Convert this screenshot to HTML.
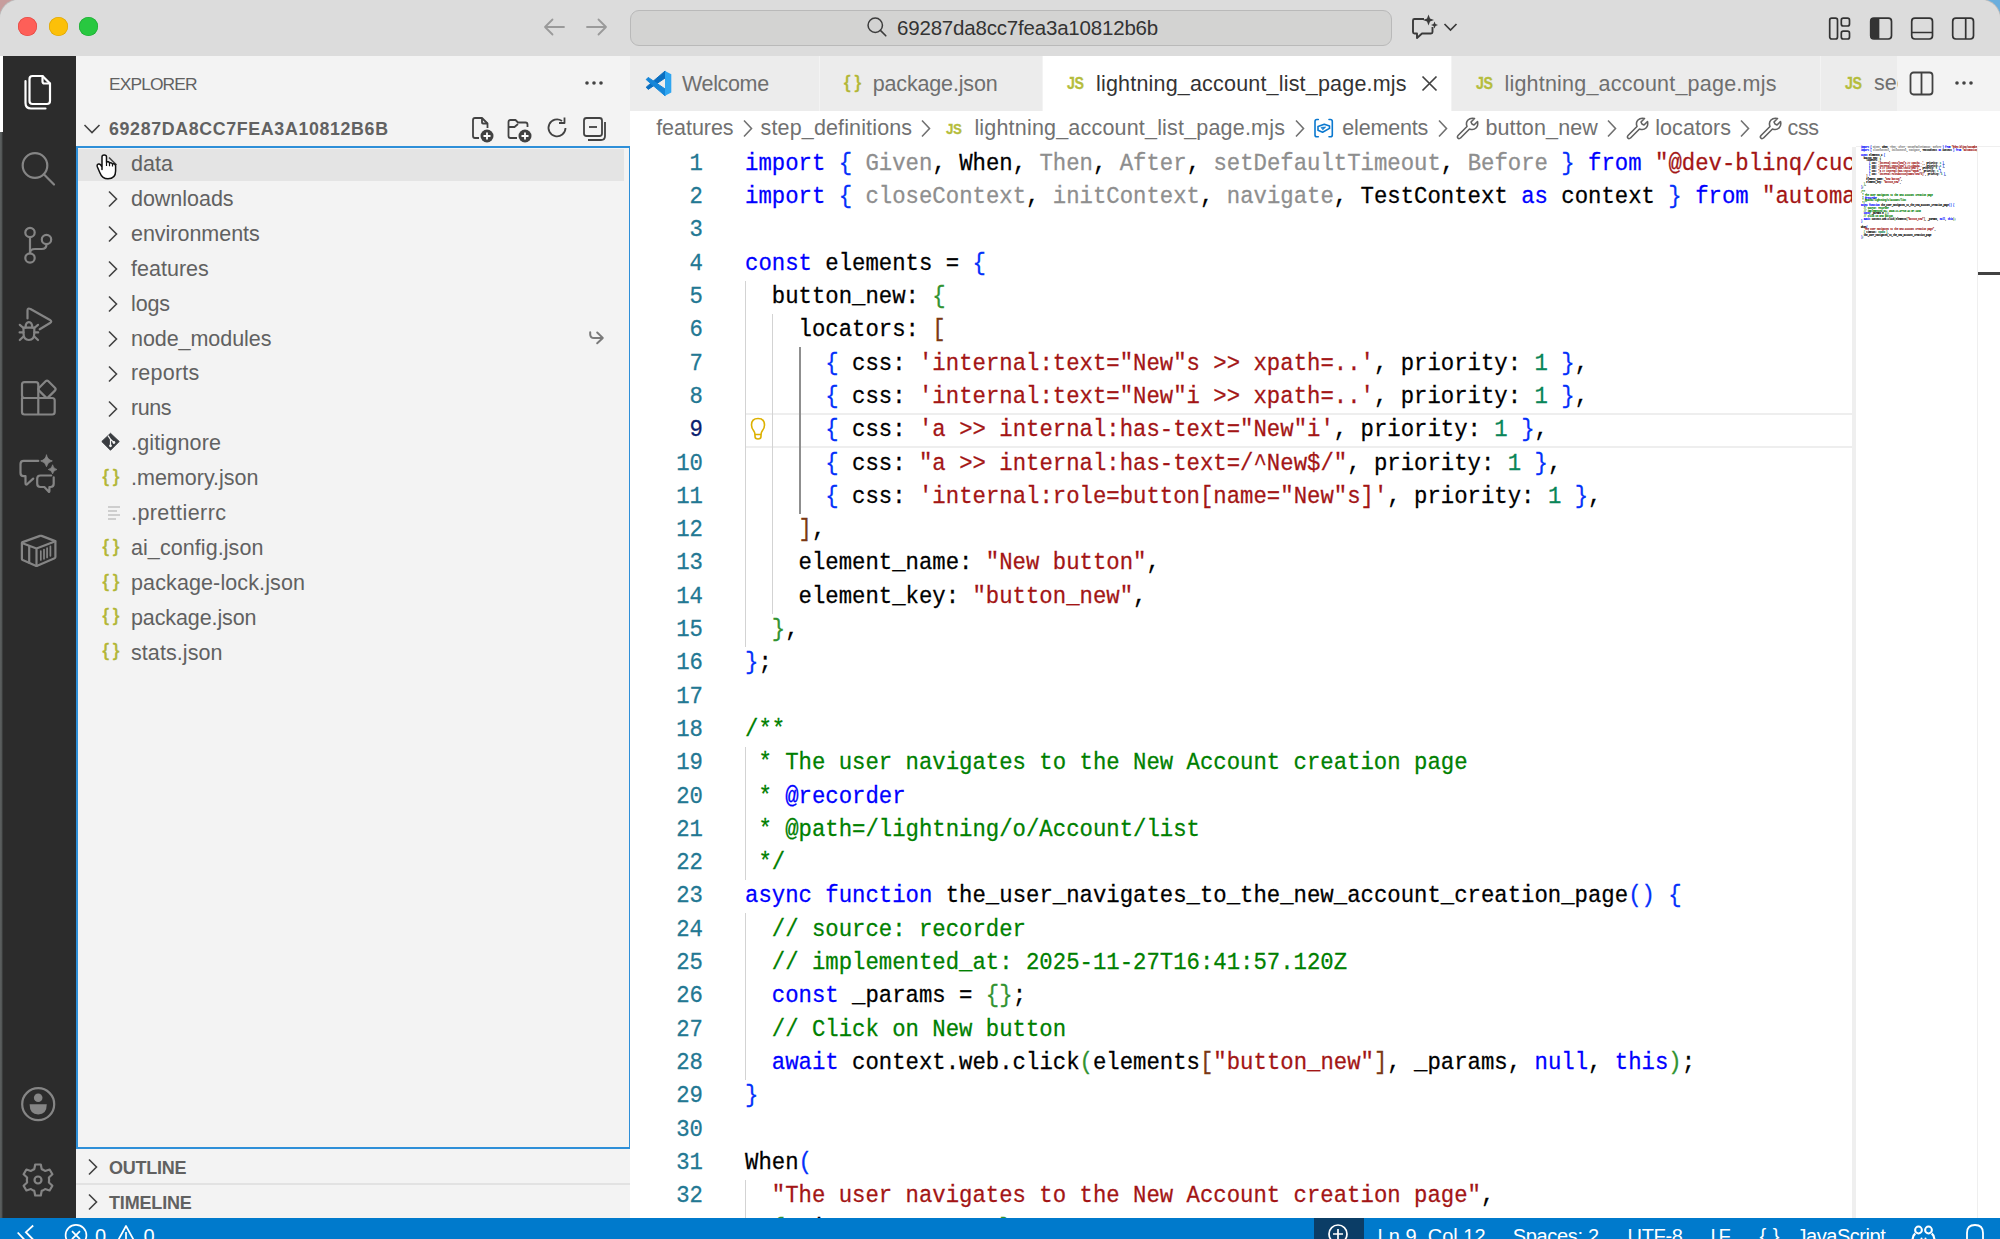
<!DOCTYPE html><html><head><meta charset="utf-8"><style>
*{margin:0;padding:0;box-sizing:border-box}
html,body{width:2000px;height:1239px;overflow:hidden;background:#dcdcdc}
body{position:relative;font-family:"Liberation Sans",sans-serif}
.a{position:absolute}
.t{position:absolute;white-space:pre;line-height:1}
svg{position:absolute;overflow:visible}
.code{font-family:"Liberation Mono",monospace;font-size:22.30px;white-space:pre}
.ln{position:absolute;width:62px;text-align:right;height:33.30px;line-height:33.30px}
.cl{position:absolute;height:33.30px;line-height:33.30px}
.sy{transform-origin:0 23px;transform:scaleY(1.09);-webkit-text-stroke:0.25px currentColor}
.k{color:#0000ff}.s{color:#a31515}.n{color:#098658}.c{color:#008000}.f{color:#8e8e8e}
.b1{color:#0431fa}.b2{color:#319331}.b3{color:#7b3814}
</style></head><body>
<div class="a" style="left:0;top:0;width:40px;height:40px;background:#c79d9d"></div>
<div class="a" style="left:1960px;top:0;width:40px;height:40px;background:#6aaedd"></div>
<div class="a" style="left:0;top:0;width:2000px;height:1300px;border-radius:19px 19px 0 0;background:#dcdcdc;overflow:hidden;box-shadow:0 0 0 1px #bdbdbd">
<div class="a" style="left:0;top:0;width:2000px;height:55px;background:#dcdcdc"></div>
<div class="a" style="left:18.4px;top:17.0px;width:18.8px;height:18.8px;border-radius:50%;background:#fe5f58;box-shadow:inset 0 0 0 0.6px #e14640"></div>
<div class="a" style="left:48.9px;top:17.0px;width:18.8px;height:18.8px;border-radius:50%;background:#fcc009;box-shadow:inset 0 0 0 0.6px #d9a406"></div>
<div class="a" style="left:79.39999999999999px;top:17.0px;width:18.8px;height:18.8px;border-radius:50%;background:#28c840;box-shadow:inset 0 0 0 0.6px #1ea934"></div>
<svg style="left:543px;top:17px" width="24" height="20" viewBox="0 0 24 20"><path d="M2 10H21M2 10L9.5 2.5M2 10L9.5 17.5" stroke="#9a9a9a" stroke-width="1.8" fill="none" stroke-linecap="round"/></svg>
<svg style="left:584px;top:17px" width="24" height="20" viewBox="0 0 24 20"><path d="M22 10H3M22 10L14.5 2.5M22 10L14.5 17.5" stroke="#9a9a9a" stroke-width="1.8" fill="none" stroke-linecap="round"/></svg>
<div class="a" style="left:629.5px;top:9.5px;width:762px;height:36.5px;border-radius:9px;background:#d3d3d2;border:1.3px solid #b9b9b9"></div>
<svg style="left:866px;top:17px" width="22" height="22" viewBox="0 0 22 22"><circle cx="9.25" cy="8.25" r="7.2" stroke="#3c3c3c" stroke-width="1.5" fill="none"/><path d="M14.4 13.4L19.8 18.8" stroke="#3c3c3c" stroke-width="1.6" stroke-linecap="round"/></svg>
<div class="t" style="left:897.00px;top:18.25px;font-size:20.5px;color:#333333;font-weight:400;font-family:'Liberation Sans';letter-spacing:-0.192px;">69287da8cc7fea3a10812b6b</div>
<svg style="left:1410px;top:13px" width="30" height="28" viewBox="0 0 30 28"><path d="M14 6H4.5Q3 6 3 7.5V19Q3 20.5 4.5 20.5H7V25L12 20.5H21Q22.5 20.5 22.5 19V14" stroke="#3a3a3a" stroke-width="1.9" fill="none" stroke-linejoin="round"/><path d="M18.5 1.5L20 5.5L24 7L20 8.5L18.5 12.5L17 8.5L13 7L17 5.5Z" fill="#3a3a3a"/><path d="M24.5 8.5L25.5 11L28 12L25.5 13L24.5 15.5L23.5 13L21 12L23.5 11Z" fill="#3a3a3a"/></svg>
<svg style="left:1443px;top:22px" width="15" height="10" viewBox="0 0 15 10"><path d="M1.5 2L7.5 8L13.5 2" stroke="#3a3a3a" stroke-width="1.7" fill="none"/></svg>
<svg style="left:1827.5px;top:15.7px" width="26" height="26" viewBox="0 0 26 26" fill="none" stroke="#333" stroke-width="1.7"><rect x="1.7" y="2.2" width="7.8" height="20.8" rx="2"/><rect x="13.3" y="2.2" width="8.2" height="7.8" rx="2"/><rect x="13.3" y="15.2" width="8.2" height="7.8" rx="2"/></svg>
<svg style="left:1868.5px;top:15.7px" width="26" height="26" viewBox="0 0 26 26" fill="none" stroke="#333" stroke-width="1.7"><rect x="1.7" y="2.2" width="20.8" height="20.8" rx="3.2"/><path d="M2 2.5H10.2V22.8H2Z" fill="#333" stroke="none"/><path d="M5 2.2H10.2V23H5" fill="#333" stroke="none"/></svg>
<svg style="left:1909.5px;top:15.7px" width="26" height="26" viewBox="0 0 26 26" fill="none" stroke="#333" stroke-width="1.7"><rect x="1.7" y="2.2" width="20.8" height="20.8" rx="3.2"/><path d="M2 16.5H22.5"/></svg>
<svg style="left:1950.5px;top:15.7px" width="26" height="26" viewBox="0 0 26 26" fill="none" stroke="#333" stroke-width="1.7"><rect x="1.7" y="2.2" width="20.8" height="20.8" rx="3.2"/><path d="M14.7 2.2V23"/></svg>
<div class="a" style="left:0;top:55.5px;width:76px;height:1170px;background:#2c2c2c"></div>
<div class="a" style="left:0;top:132px;width:2.5px;height:1090px;background:linear-gradient(90deg,#5a5e5e 0,#5a5e5e 1.2px,#3a3c3c 2.5px)"></div>
<div class="a" style="left:0;top:55.5px;width:3px;height:76.5px;background:#ffffff"></div>
<svg style="left:18.0px;top:73.0px" width="40" height="40" viewBox="0 0 40 40" fill="none" stroke="#ffffff" stroke-width="2.2" stroke-linejoin="round" stroke-linecap="round"><path d="M11.5 6Q11.5 3 14.5 3H24.5L32 10.5V28Q32 31 29 31H14.5Q11.5 31 11.5 28Z"/><path d="M24.5 3V8.5Q24.5 10.5 26.5 10.5H32"/><path d="M7.5 8V30Q7.5 35.5 13 35.5H27.5"/></svg>
<svg style="left:18.0px;top:148.0px" width="40" height="40" viewBox="0 0 40 40" fill="none" stroke="#858585" stroke-width="2.2" stroke-linejoin="round" stroke-linecap="round"><circle cx="17" cy="17.5" r="12.3"/><path d="M25.8 26.3L36 36.5"/></svg>
<svg style="left:18.0px;top:225.0px" width="40" height="40" viewBox="0 0 40 40" fill="none" stroke="#858585" stroke-width="2.2" stroke-linejoin="round" stroke-linecap="round"><circle cx="12" cy="7.5" r="4.7"/><circle cx="12" cy="33" r="4.7"/><circle cx="28.5" cy="14.5" r="4.7"/><path d="M12 12.2V28.3"/><path d="M28.5 19.2Q28.5 24 23.5 24H17Q12 24 12 28"/></svg>
<svg style="left:18.0px;top:303.0px" width="40" height="40" viewBox="0 0 40 40" fill="none" stroke="#858585" stroke-width="2.2" stroke-linejoin="round" stroke-linecap="round"><path d="M9.5 15.5V7.5Q9.5 4.5 12.5 6L32 17Q34.5 18.5 32 20L21.7 26.3"/><path d="M5.5 24.6H16.3V30Q16.3 37 10.9 37Q5.5 37 5.5 30Z"/><path d="M7.6 24.6Q7.6 19.2 10.9 19.2Q14.2 19.2 14.2 24.6"/><path d="M1.8 21.8L5.5 25M1.6 29.4H5.5M1.8 37L5.5 33.5M20 21.8L16.3 25M20.2 29.4H16.3M20 37L16.3 33.5"/></svg>
<svg style="left:18.0px;top:378.0px" width="40" height="40" viewBox="0 0 40 40" fill="none" stroke="#858585" stroke-width="2.2" stroke-linejoin="round" stroke-linecap="round"><path d="M20.3 20H6.4Q4 20 4 17.6V6.6Q4 4.2 6.4 4.2H17.9Q20.3 4.2 20.3 6.6Z"/><path d="M4 20V34Q4 36.5 6.5 36.5H34.2Q36.7 36.5 36.7 34V22.5Q36.7 20 34.2 20H4M20.3 20V36.5"/><path d="M27.6 3.3Q29 1.9 30.4 3.3L36.9 9.8Q38.3 11.2 36.9 12.6L30.4 19.1Q29 20.5 27.6 19.1L21.1 12.6Q19.7 11.2 21.1 9.8Z"/></svg>
<svg style="left:18.0px;top:454.0px" width="40" height="40" viewBox="0 0 40 40" fill="none" stroke="#858585" stroke-width="2.2" stroke-linejoin="round" stroke-linecap="round"><path d="M20.3 6.9H5.7Q2.5 6.9 2.5 10.1V19Q2.5 22.2 5.7 22.2H7.5V29Q7.5 31.6 9.6 29.8L15.2 24.6"/><path d="M33.2 21.5H22.4Q19.2 21.5 19.2 24.7V29.8Q19.2 33 22.4 33H26.3L30.6 37.6Q31.4 38.3 31.4 37V33H32.5Q35.7 33 35.7 29.8V23.3"/><path d="M28.5 1.1Q29.4 5.9 34.3 6.9Q29.4 7.9 28.5 12.7Q27.6 7.9 22.7 6.9Q27.6 5.9 28.5 1.1Z" fill="#858585" stroke-width="0.8"/><path d="M34.6 11.2Q35.3 14.8 38.9 15.5Q35.3 16.2 34.6 19.8Q33.9 16.2 30.3 15.5Q33.9 14.8 34.6 11.2Z" fill="#858585" stroke-width="0.8"/></svg>
<svg style="left:18.0px;top:530.0px" width="40" height="40" viewBox="0 0 40 40" fill="none" stroke="#858585" stroke-width="2.2" stroke-linejoin="round" stroke-linecap="round"><path d="M3.9 13.2Q3.9 12.4 4.7 12.1L22 5.9Q22.8 5.6 23.6 5.9L36.6 10.9Q37.4 11.2 37.4 12V27.1Q37.4 27.9 36.6 28.2L19.3 35.7Q18.5 36.1 17.7 35.7L4.7 30.1Q3.9 29.7 3.9 28.9Z"/><path d="M3.9 13L18.5 18.5L37.4 11.2M18.5 18.5V36M11.2 15.8V32.8"/><path d="M22.8 21V30M26 19.6V28.8M29.1 18V27.4M32.4 16.3V25.8" stroke-width="1.7"/></svg>
<svg style="left:18.0px;top:1084.0px" width="40" height="40" viewBox="0 0 40 40" fill="none" stroke="#858585" stroke-width="2.2" stroke-linejoin="round" stroke-linecap="round"><circle cx="20.2" cy="20.2" r="16"/><circle cx="20.2" cy="13.8" r="4.3" fill="#858585" stroke="none"/><path d="M11.6 20.2H28.8Q28.8 30.4 20.2 30.4Q11.6 30.4 11.6 20.2Z" fill="#858585" stroke="none"/></svg>
<svg style="left:18.0px;top:1160.0px" width="40" height="40" viewBox="0 0 40 40" fill="none" stroke="#858585" stroke-width="2.2" stroke-linejoin="round" stroke-linecap="round"><circle cx="20" cy="20" r="3.5"/><path d="M17.2 4.5H22.8L23.7 9.1Q25.6 9.8 27.1 11L31.6 9.5L34.4 14.3L30.9 17.5Q31.3 20 30.9 22.5L34.4 25.7L31.6 30.5L27.1 29Q25.6 30.2 23.7 30.9L22.8 35.5H17.2L16.3 30.9Q14.4 30.2 12.9 29L8.4 30.5L5.6 25.7L9.1 22.5Q8.7 20 9.1 17.5L5.6 14.3L8.4 9.5L12.9 11Q14.4 9.8 16.3 9.1Z"/></svg>
<div class="a" style="left:76px;top:55.5px;width:554px;height:1170px;background:#f3f3f3"></div>
<div class="t" style="left:109.00px;top:75.80px;font-size:17.4px;color:#616161;font-weight:400;font-family:'Liberation Sans';letter-spacing:-0.888px;">EXPLORER</div>
<svg style="left:584px;top:80px" width="20" height="6" viewBox="0 0 20 6"><circle cx="3" cy="3" r="1.8" fill="#424242"/><circle cx="10" cy="3" r="1.8" fill="#424242"/><circle cx="17" cy="3" r="1.8" fill="#424242"/></svg>
<svg style="left:83px;top:123px" width="18" height="12" viewBox="0 0 18 12"><path d="M1.5 2L9 9.5L16.5 2" stroke="#424242" stroke-width="1.6" fill="none"/></svg>
<div class="t" style="left:109.00px;top:121.30px;font-size:17.8px;color:#616161;font-weight:700;font-family:'Liberation Sans';letter-spacing:0.656px;">69287DA8CC7FEA3A10812B6B</div>
<svg style="left:468px;top:115px" width="28" height="28" viewBox="0 0 28 28" fill="none" stroke="#424242" stroke-width="1.8" stroke-linejoin="round"><path d="M11 23H7Q5 23 5 21V5Q5 3 7 3H14L19.5 8.5V13"/><path d="M14 3V7.5Q14 8.5 15 8.5H19.5"/><circle cx="19" cy="21" r="6.5" fill="#424242" stroke="none"/><path d="M19 17.5V24.5M15.5 21H22.5" stroke="#fff" stroke-width="1.8"/></svg>
<svg style="left:505px;top:115px" width="28" height="28" viewBox="0 0 28 28" fill="none" stroke="#424242" stroke-width="1.8" stroke-linejoin="round"><path d="M12 23H5.5Q3.5 23 3.5 21V7Q3.5 5 5.5 5H10.5L13 7.5H20.5Q22.5 7.5 22.5 9.5V12"/><path d="M3.5 12H9.5L13 9"/><circle cx="20" cy="21" r="6.5" fill="#424242" stroke="none"/><path d="M20 17.5V24.5M16.5 21H23.5" stroke="#fff" stroke-width="1.8"/></svg>
<svg style="left:543px;top:115px" width="28" height="28" viewBox="0 0 28 28" fill="none" stroke="#424242" stroke-width="1.8" stroke-linejoin="round"><path d="M22.5 13A8.5 8.5 0 1 1 19 6"/><path d="M21.5 2.5V8H16"/></svg>
<svg style="left:581px;top:115px" width="28" height="28" viewBox="0 0 28 28" fill="none" stroke="#424242" stroke-width="1.8" stroke-linejoin="round"><rect x="3" y="3" width="18" height="18" rx="2.5"/><path d="M24 7V21Q24 25 20 25H7"/><path d="M8 12H16"/></svg>
<div class="a" style="left:76px;top:146px;width:554px;height:1003px;border:2px solid #2e8fd8;border-right-width:1.6px"></div>
<div class="a" style="left:78px;top:148.8px;width:546px;height:31.8px;background:#e4e4e4"></div>
<svg style="left:106px;top:155.50px" width="14" height="18" viewBox="0 0 14 18"><path d="M3 1.5L10.5 9" stroke="#424242" stroke-width="1.6" fill="none"/></svg>
<div class="t" style="left:131.00px;top:153.85px;font-size:21.5px;color:#616161;font-weight:400;font-family:'Liberation Sans';letter-spacing:0.000px;">data</div>
<svg style="left:106px;top:190.43px" width="14" height="18" viewBox="0 0 14 18"><path d="M3 1.5L10.5 9L3 16.5" stroke="#424242" stroke-width="1.6" fill="none"/></svg>
<div class="t" style="left:131.00px;top:188.78px;font-size:21.5px;color:#616161;font-weight:400;font-family:'Liberation Sans';letter-spacing:-0.025px;">downloads</div>
<svg style="left:106px;top:225.36px" width="14" height="18" viewBox="0 0 14 18"><path d="M3 1.5L10.5 9L3 16.5" stroke="#424242" stroke-width="1.6" fill="none"/></svg>
<div class="t" style="left:131.00px;top:223.71px;font-size:21.5px;color:#616161;font-weight:400;font-family:'Liberation Sans';letter-spacing:-0.025px;">environments</div>
<svg style="left:106px;top:260.29px" width="14" height="18" viewBox="0 0 14 18"><path d="M3 1.5L10.5 9L3 16.5" stroke="#424242" stroke-width="1.6" fill="none"/></svg>
<div class="t" style="left:131.00px;top:258.64px;font-size:21.5px;color:#616161;font-weight:400;font-family:'Liberation Sans';letter-spacing:0.016px;">features</div>
<svg style="left:106px;top:295.22px" width="14" height="18" viewBox="0 0 14 18"><path d="M3 1.5L10.5 9L3 16.5" stroke="#424242" stroke-width="1.6" fill="none"/></svg>
<div class="t" style="left:131.00px;top:293.57px;font-size:21.5px;color:#616161;font-weight:400;font-family:'Liberation Sans';letter-spacing:-0.151px;">logs</div>
<svg style="left:106px;top:330.15px" width="14" height="18" viewBox="0 0 14 18"><path d="M3 1.5L10.5 9L3 16.5" stroke="#424242" stroke-width="1.6" fill="none"/></svg>
<div class="t" style="left:131.00px;top:328.50px;font-size:21.5px;color:#616161;font-weight:400;font-family:'Liberation Sans';letter-spacing:-0.060px;">node_modules</div>
<svg style="left:106px;top:365.08px" width="14" height="18" viewBox="0 0 14 18"><path d="M3 1.5L10.5 9L3 16.5" stroke="#424242" stroke-width="1.6" fill="none"/></svg>
<div class="t" style="left:131.00px;top:363.43px;font-size:21.5px;color:#616161;font-weight:400;font-family:'Liberation Sans';letter-spacing:0.213px;">reports</div>
<svg style="left:106px;top:400.01px" width="14" height="18" viewBox="0 0 14 18"><path d="M3 1.5L10.5 9L3 16.5" stroke="#424242" stroke-width="1.6" fill="none"/></svg>
<div class="t" style="left:131.00px;top:398.36px;font-size:21.5px;color:#616161;font-weight:400;font-family:'Liberation Sans';letter-spacing:-0.409px;">runs</div>
<svg style="left:101px;top:433.44px" width="20" height="20" viewBox="0 0 20 20"><path d="M9.5 0.3L18.2 8.5L9.5 17.2L0.8 8.5Z" fill="#393c40" stroke="#393c40" stroke-width="1" stroke-linejoin="round"/><path d="M7 2.6L9.5 6.3V12.6M9.5 6.3L12.8 9.4" stroke="#f3f3f3" stroke-width="1.2" fill="none"/><circle cx="9.5" cy="12.8" r="1.4" fill="#f3f3f3"/><circle cx="12.9" cy="9.5" r="1.4" fill="#f3f3f3"/></svg>
<div class="t" style="left:131.00px;top:433.29px;font-size:21.5px;color:#616161;font-weight:400;font-family:'Liberation Sans';letter-spacing:0.172px;">.gitignore</div>
<div class="t" style="left:102.5px;top:465.72px;font-size:19px;color:#b2b634;font-weight:400;-webkit-text-stroke:0.6px #b2b634">{</div>
<div class="t" style="left:113.0px;top:465.72px;font-size:19px;color:#b2b634;font-weight:400;-webkit-text-stroke:0.6px #b2b634">}</div>
<div class="t" style="left:131.00px;top:468.22px;font-size:21.5px;color:#616161;font-weight:400;font-family:'Liberation Sans';letter-spacing:0.006px;">.memory.json</div>
<svg style="left:107px;top:505.30px" width="16" height="16" viewBox="0 0 16 16"><path d="M1 2H13M1 6H10M1 10H13M1 14H9" stroke="#c2c2c2" stroke-width="1.7"/></svg>
<div class="t" style="left:131.00px;top:503.15px;font-size:21.5px;color:#616161;font-weight:400;font-family:'Liberation Sans';letter-spacing:0.419px;">.prettierrc</div>
<div class="t" style="left:102.5px;top:535.58px;font-size:19px;color:#b2b634;font-weight:400;-webkit-text-stroke:0.6px #b2b634">{</div>
<div class="t" style="left:113.0px;top:535.58px;font-size:19px;color:#b2b634;font-weight:400;-webkit-text-stroke:0.6px #b2b634">}</div>
<div class="t" style="left:131.00px;top:538.08px;font-size:21.5px;color:#616161;font-weight:400;font-family:'Liberation Sans';letter-spacing:0.070px;">ai_config.json</div>
<div class="t" style="left:102.5px;top:570.51px;font-size:19px;color:#b2b634;font-weight:400;-webkit-text-stroke:0.6px #b2b634">{</div>
<div class="t" style="left:113.0px;top:570.51px;font-size:19px;color:#b2b634;font-weight:400;-webkit-text-stroke:0.6px #b2b634">}</div>
<div class="t" style="left:131.00px;top:573.01px;font-size:21.5px;color:#616161;font-weight:400;font-family:'Liberation Sans';letter-spacing:0.118px;">package-lock.json</div>
<div class="t" style="left:102.5px;top:605.44px;font-size:19px;color:#b2b634;font-weight:400;-webkit-text-stroke:0.6px #b2b634">{</div>
<div class="t" style="left:113.0px;top:605.44px;font-size:19px;color:#b2b634;font-weight:400;-webkit-text-stroke:0.6px #b2b634">}</div>
<div class="t" style="left:131.00px;top:607.94px;font-size:21.5px;color:#616161;font-weight:400;font-family:'Liberation Sans';letter-spacing:-0.109px;">package.json</div>
<div class="t" style="left:102.5px;top:640.37px;font-size:19px;color:#b2b634;font-weight:400;-webkit-text-stroke:0.6px #b2b634">{</div>
<div class="t" style="left:113.0px;top:640.37px;font-size:19px;color:#b2b634;font-weight:400;-webkit-text-stroke:0.6px #b2b634">}</div>
<div class="t" style="left:131.00px;top:642.87px;font-size:21.5px;color:#616161;font-weight:400;font-family:'Liberation Sans';letter-spacing:0.075px;">stats.json</div>
<svg style="left:90px;top:145px" width="40" height="40" viewBox="0 0 40 40"><path d="M12 24.5V11.8Q12 10 14.2 10Q16.5 10 16.5 11.8V17Q18.7 16 19.5 18Q21.5 17.2 22.5 19Q24.8 18.3 25.6 20.8V26Q25.6 33.8 18 33.8Q12.2 33.8 10 28L7.3 21.8Q6.6 19.4 8.6 19Q10.6 18.6 12 22Z" fill="#fff" stroke="#111" stroke-width="1.5" stroke-linejoin="round"/><path d="M16.5 17V21M19.5 18V21.2M22.5 19V21.5" stroke="#111" stroke-width="1.2"/></svg>
<svg style="left:586px;top:329px" width="20" height="18" viewBox="0 0 20 18"><path d="M4.2 3.2V5.2Q4.2 9 8 9H16.5M11.2 3.5L16.8 8.9L11.2 14.2" stroke="#7a7a7a" stroke-width="2" fill="none" stroke-linecap="round" stroke-linejoin="round"/></svg>
<div class="a" style="left:76px;top:1183.3px;width:554px;height:1.5px;background:#e2e2e2"></div>
<svg style="left:86px;top:1158px" width="14" height="18" viewBox="0 0 14 18"><path d="M3 1.5L10.5 9L3 16.5" stroke="#424242" stroke-width="1.6" fill="none"/></svg>
<div class="t" style="left:109.00px;top:1159.00px;font-size:18px;color:#616161;font-weight:700;font-family:'Liberation Sans';letter-spacing:-0.250px;">OUTLINE</div>
<svg style="left:86px;top:1192.5px" width="14" height="18" viewBox="0 0 14 18"><path d="M3 1.5L10.5 9L3 16.5" stroke="#424242" stroke-width="1.6" fill="none"/></svg>
<div class="t" style="left:109.00px;top:1193.60px;font-size:18px;color:#616161;font-weight:700;font-family:'Liberation Sans';letter-spacing:-0.171px;">TIMELINE</div>
<div class="a" style="left:630px;top:55.5px;width:1370px;height:1170px;background:#ffffff"></div>
<div class="a" style="left:630px;top:55.5px;width:1370px;height:55.5px;background:#f3f3f3"></div>
<div class="a" style="left:630px;top:55.5px;width:190px;height:55.5px;background:#ececec;border-right:1.3px solid #f3f3f3"></div>
<svg style="left:645px;top:70px" width="28" height="28" viewBox="0 0 28 28"><path d="M1.2 17.2L3.2 19.4L20.1 8V1Z" fill="#0b6fc0" stroke="#0b6fc0" stroke-width="1" stroke-linejoin="round"/><path d="M1.2 9.6L3.2 7.4L20.1 19V25.8Z" fill="#1686d8" stroke="#1686d8" stroke-width="1" stroke-linejoin="round"/><path d="M20 0.9L26.3 4.2V22.4L20 25.8Z" fill="#2fa5f0"/></svg>
<div class="a" style="left:820px;top:55.5px;width:223px;height:55.5px;background:#ececec;border-right:1.3px solid #f3f3f3"></div>
<div class="t" style="left:844px;top:71.85px;font-size:19px;color:#b2b634;font-weight:400;-webkit-text-stroke:0.6px #b2b634">{</div>
<div class="t" style="left:854.8px;top:71.85px;font-size:19px;color:#b2b634;font-weight:400;-webkit-text-stroke:0.6px #b2b634">}</div>
<div class="a" style="left:1043px;top:55.5px;width:409px;height:55.5px;background:#ffffff;border-right:1.3px solid #f3f3f3"></div>
<div class="t" style="left:1067px;top:74.5px;font-size:16.5px;color:#b5bd3c;font-weight:700;letter-spacing:-0.6px;transform:scaleX(0.86);-webkit-text-stroke:0.3px #b5bd3c;transform-origin:0 0">JS</div>
<div class="a" style="left:1452px;top:55.5px;width:369px;height:55.5px;background:#ececec;border-right:1.3px solid #f3f3f3"></div>
<div class="t" style="left:1476px;top:74.5px;font-size:16.5px;color:#b5bd3c;font-weight:700;letter-spacing:-0.6px;transform:scaleX(0.86);-webkit-text-stroke:0.3px #b5bd3c;transform-origin:0 0">JS</div>
<div class="a" style="left:1821px;top:55.5px;width:77px;height:55.5px;background:#ececec;border-right:1.3px solid #f3f3f3"></div>
<div class="t" style="left:1845px;top:74.5px;font-size:16.5px;color:#b5bd3c;font-weight:700;letter-spacing:-0.6px;transform:scaleX(0.86);-webkit-text-stroke:0.3px #b5bd3c;transform-origin:0 0">JS</div>
<div class="a" style="left:1898px;top:55.5px;width:102px;height:55.5px;background:#f3f3f3"></div>
<div class="t" style="left:682.00px;top:73.80px;font-size:21.5px;color:#6f6f6f;font-weight:400;font-family:'Liberation Sans';letter-spacing:-0.353px;">Welcome</div>
<div class="t" style="left:872.70px;top:73.80px;font-size:21.5px;color:#6f6f6f;font-weight:400;font-family:'Liberation Sans';letter-spacing:-0.155px;">package.json</div>
<div class="t" style="left:1096.00px;top:73.80px;font-size:21.5px;color:#333333;font-weight:400;font-family:'Liberation Sans';letter-spacing:0.191px;">lightning_account_list_page.mjs</div>
<div class="t" style="left:1504.40px;top:73.80px;font-size:21.5px;color:#6f6f6f;font-weight:400;font-family:'Liberation Sans';letter-spacing:0.218px;">lightning_account_page.mjs</div>
<div class="a" style="left:1874px;top:60px;width:24px;height:45px;overflow:hidden">
<div class="t" style="left:0;top:72.5px;font-size:21.5px;color:#6f6f6f;top:12.5px">second</div>
</div>
<svg style="left:1421px;top:75px" width="17" height="17" viewBox="0 0 17 17"><path d="M1.5 1.5L15.5 15.5M15.5 1.5L1.5 15.5" stroke="#424242" stroke-width="1.7"/></svg>
<svg style="left:1909px;top:71px" width="26" height="26" viewBox="0 0 26 26"><rect x="1.5" y="1.5" width="22" height="22" rx="3" stroke="#424242" stroke-width="1.8" fill="none"/><path d="M12.5 2V24" stroke="#424242" stroke-width="1.8"/></svg>
<svg style="left:1954px;top:80px" width="20" height="6" viewBox="0 0 20 6"><circle cx="3" cy="3" r="1.8" fill="#424242"/><circle cx="10" cy="3" r="1.8" fill="#424242"/><circle cx="17" cy="3" r="1.8" fill="#424242"/></svg>
<div class="t" style="left:656.20px;top:118.25px;font-size:21.5px;color:#717171;font-weight:400;font-family:'Liberation Sans';letter-spacing:-0.041px;">features</div>
<svg style="left:742px;top:119px" width="12" height="19" viewBox="0 0 12 19"><path d="M2 1.5L9.5 9.5L2 17.5" stroke="#717171" stroke-width="1.6" fill="none"/></svg>
<div class="t" style="left:760.60px;top:118.25px;font-size:21.5px;color:#717171;font-weight:400;font-family:'Liberation Sans';letter-spacing:0.139px;">step_definitions</div>
<svg style="left:919.5px;top:119px" width="12" height="19" viewBox="0 0 12 19"><path d="M2 1.5L9.5 9.5L2 17.5" stroke="#717171" stroke-width="1.6" fill="none"/></svg>
<div class="t" style="left:946px;top:120.5px;font-size:15.5px;color:#b5bd3c;font-weight:700;letter-spacing:-0.6px;transform:scaleX(0.86);-webkit-text-stroke:0.3px #b5bd3c;transform-origin:0 0">JS</div>
<div class="t" style="left:974.40px;top:118.25px;font-size:21.5px;color:#717171;font-weight:400;font-family:'Liberation Sans';letter-spacing:0.191px;">lightning_account_list_page.mjs</div>
<svg style="left:1293.5px;top:119px" width="12" height="19" viewBox="0 0 12 19"><path d="M2 1.5L9.5 9.5L2 17.5" stroke="#717171" stroke-width="1.6" fill="none"/></svg>
<svg style="left:1313px;top:117px" width="22" height="22" viewBox="0 0 22 22" fill="none" stroke="#0a78cf" stroke-width="1.6" stroke-linecap="round" stroke-linejoin="round"><path d="M5.3 2.5H3.9Q2 2.5 2 4.4V17.9Q2 19.8 3.9 19.8H5.3M16 2.5H17.4Q19.3 2.5 19.3 4.4V17.9Q19.3 19.8 17.4 19.8H16"/><path d="M5 9.6L11.3 7.2L16.5 9V11.4L9.6 15.3L5 13.2Z"/><path d="M8.5 10.4L12.6 10.1L10 12.6Z" fill="#0a78cf" stroke-width="0.8"/></svg>
<div class="t" style="left:1342.30px;top:118.25px;font-size:21.5px;color:#717171;font-weight:400;font-family:'Liberation Sans';letter-spacing:-0.193px;">elements</div>
<svg style="left:1436.5px;top:119px" width="12" height="19" viewBox="0 0 12 19"><path d="M2 1.5L9.5 9.5L2 17.5" stroke="#717171" stroke-width="1.6" fill="none"/></svg>
<svg style="left:1454.5px;top:114.6px" width="24" height="24" viewBox="0 0 24 24"><path d="M3 20.5L12 11.5Q10.5 7.5 13 5Q15.5 2.5 19.5 3.5L16 7L17 9L19 10L22.5 6.5Q23.5 10.5 21 13Q18.5 15.5 14.5 14L5.5 23Q4 24.2 2.8 23Q1.8 22 3 20.5Z" stroke="#616161" stroke-width="1.6" fill="none" stroke-linejoin="round"/></svg>
<div class="t" style="left:1485.40px;top:118.25px;font-size:21.5px;color:#717171;font-weight:400;font-family:'Liberation Sans';letter-spacing:0.146px;">button_new</div>
<svg style="left:1605.5px;top:119px" width="12" height="19" viewBox="0 0 12 19"><path d="M2 1.5L9.5 9.5L2 17.5" stroke="#717171" stroke-width="1.6" fill="none"/></svg>
<svg style="left:1624.5px;top:114.6px" width="24" height="24" viewBox="0 0 24 24"><path d="M3 20.5L12 11.5Q10.5 7.5 13 5Q15.5 2.5 19.5 3.5L16 7L17 9L19 10L22.5 6.5Q23.5 10.5 21 13Q18.5 15.5 14.5 14L5.5 23Q4 24.2 2.8 23Q1.8 22 3 20.5Z" stroke="#616161" stroke-width="1.6" fill="none" stroke-linejoin="round"/></svg>
<div class="t" style="left:1655.30px;top:118.25px;font-size:21.5px;color:#717171;font-weight:400;font-family:'Liberation Sans';letter-spacing:0.043px;">locators</div>
<svg style="left:1738.5px;top:119px" width="12" height="19" viewBox="0 0 12 19"><path d="M2 1.5L9.5 9.5L2 17.5" stroke="#717171" stroke-width="1.6" fill="none"/></svg>
<svg style="left:1757.5px;top:114.6px" width="24" height="24" viewBox="0 0 24 24"><path d="M3 20.5L12 11.5Q10.5 7.5 13 5Q15.5 2.5 19.5 3.5L16 7L17 9L19 10L22.5 6.5Q23.5 10.5 21 13Q18.5 15.5 14.5 14L5.5 23Q4 24.2 2.8 23Q1.8 22 3 20.5Z" stroke="#616161" stroke-width="1.6" fill="none" stroke-linejoin="round"/></svg>
<div class="t" style="left:1787.60px;top:118.25px;font-size:21.5px;color:#717171;font-weight:400;font-family:'Liberation Sans';letter-spacing:-0.375px;">css</div>
<div class="a" style="left:745px;top:413.10px;width:1108px;height:34.90px;border-top:2px solid #eeeeee;border-bottom:2px solid #eeeeee"></div>
<div class="a" style="left:745.00px;top:280.70px;width:1.4px;height:366.30px;background:#d3d3d3"></div>
<div class="a" style="left:771.76px;top:314.00px;width:1.4px;height:299.70px;background:#d3d3d3"></div>
<div class="a" style="left:798.52px;top:347.30px;width:2px;height:166.50px;background:#8f8f8f"></div>
<div class="a" style="left:745.00px;top:746.90px;width:1.4px;height:133.20px;background:#d3d3d3"></div>
<div class="a" style="left:745.00px;top:913.40px;width:1.4px;height:166.50px;background:#d3d3d3"></div>
<div class="a" style="left:745.00px;top:1179.80px;width:1.4px;height:133.20px;background:#d3d3d3"></div>
<svg style="left:748px;top:416.40px" width="20" height="26" viewBox="0 0 20 26"><path d="M10 2.5Q16.5 2.5 16.5 9Q16.5 12 14.5 14.5Q13 16.5 13 18.5H7Q7 16.5 5.5 14.5Q3.5 12 3.5 9Q3.5 2.5 10 2.5Z" stroke="#ddb100" stroke-width="1.6" fill="none"/><path d="M7 18.5V20.5Q7 23 10 23Q13 23 13 20.5V18.5" stroke="#ddb100" stroke-width="1.6" fill="none"/></svg>
<div class="a code" style="left:630px;top:0;width:1223px;height:1218px;overflow:hidden">
<div class="t sy" style="left:11px;top:152.81px;width:62px;text-align:right;color:#237893;transform-origin:0 17.09px">1</div>
<div class="t sy" style="left:115.00px;top:152.81px;transform-origin:0 17.09px"><span class="k">import</span> <span class="b1">{</span> <span class="f">Given</span>, When, <span class="f">Then</span>, <span class="f">After</span>, <span class="f">setDefaultTimeout</span>, <span class="f">Before</span> <span class="b1">}</span> <span class="k">from</span> <span class="s">&quot;@dev-blinq/cucumber-js&quot;</span>;</div>
<div class="t sy" style="left:11px;top:186.11px;width:62px;text-align:right;color:#237893;transform-origin:0 17.09px">2</div>
<div class="t sy" style="left:115.00px;top:186.11px;transform-origin:0 17.09px"><span class="k">import</span> <span class="b1">{</span> <span class="f">closeContext</span>, <span class="f">initContext</span>, <span class="f">navigate</span>, TestContext <span class="k">as</span> context <span class="b1">}</span> <span class="k">from</span> <span class="s">&quot;automation_model&quot;</span>;</div>
<div class="t sy" style="left:11px;top:219.41px;width:62px;text-align:right;color:#237893;transform-origin:0 17.09px">3</div>
<div class="t sy" style="left:115.00px;top:219.41px;transform-origin:0 17.09px"></div>
<div class="t sy" style="left:11px;top:252.71px;width:62px;text-align:right;color:#237893;transform-origin:0 17.09px">4</div>
<div class="t sy" style="left:115.00px;top:252.71px;transform-origin:0 17.09px"><span class="k">const</span> elements = <span class="b1">{</span></div>
<div class="t sy" style="left:11px;top:286.01px;width:62px;text-align:right;color:#237893;transform-origin:0 17.09px">5</div>
<div class="t sy" style="left:115.00px;top:286.01px;transform-origin:0 17.09px">  button_new: <span class="b2">{</span></div>
<div class="t sy" style="left:11px;top:319.31px;width:62px;text-align:right;color:#237893;transform-origin:0 17.09px">6</div>
<div class="t sy" style="left:115.00px;top:319.31px;transform-origin:0 17.09px">    locators: <span class="b3">[</span></div>
<div class="t sy" style="left:11px;top:352.61px;width:62px;text-align:right;color:#237893;transform-origin:0 17.09px">7</div>
<div class="t sy" style="left:115.00px;top:352.61px;transform-origin:0 17.09px">      <span class="b1">{</span> css: <span class="s">&#x27;internal:text=&quot;New&quot;s &gt;&gt; xpath=..&#x27;</span>, priority: <span class="n">1</span> <span class="b1">}</span>,</div>
<div class="t sy" style="left:11px;top:385.91px;width:62px;text-align:right;color:#237893;transform-origin:0 17.09px">8</div>
<div class="t sy" style="left:115.00px;top:385.91px;transform-origin:0 17.09px">      <span class="b1">{</span> css: <span class="s">&#x27;internal:text=&quot;New&quot;i &gt;&gt; xpath=..&#x27;</span>, priority: <span class="n">1</span> <span class="b1">}</span>,</div>
<div class="t sy" style="left:11px;top:419.21px;width:62px;text-align:right;color:#0b216f;transform-origin:0 17.09px">9</div>
<div class="t sy" style="left:115.00px;top:419.21px;transform-origin:0 17.09px">      <span class="b1">{</span> css: <span class="s">&#x27;a &gt;&gt; internal:has-text=&quot;New&quot;i&#x27;</span>, priority: <span class="n">1</span> <span class="b1">}</span>,</div>
<div class="t sy" style="left:11px;top:452.51px;width:62px;text-align:right;color:#237893;transform-origin:0 17.09px">10</div>
<div class="t sy" style="left:115.00px;top:452.51px;transform-origin:0 17.09px">      <span class="b1">{</span> css: <span class="s">&quot;a &gt;&gt; internal:has-text=/^New$/&quot;</span>, priority: <span class="n">1</span> <span class="b1">}</span>,</div>
<div class="t sy" style="left:11px;top:485.81px;width:62px;text-align:right;color:#237893;transform-origin:0 17.09px">11</div>
<div class="t sy" style="left:115.00px;top:485.81px;transform-origin:0 17.09px">      <span class="b1">{</span> css: <span class="s">&#x27;internal:role=button[name=&quot;New&quot;s]&#x27;</span>, priority: <span class="n">1</span> <span class="b1">}</span>,</div>
<div class="t sy" style="left:11px;top:519.11px;width:62px;text-align:right;color:#237893;transform-origin:0 17.09px">12</div>
<div class="t sy" style="left:115.00px;top:519.11px;transform-origin:0 17.09px">    <span class="b3">]</span>,</div>
<div class="t sy" style="left:11px;top:552.41px;width:62px;text-align:right;color:#237893;transform-origin:0 17.09px">13</div>
<div class="t sy" style="left:115.00px;top:552.41px;transform-origin:0 17.09px">    element_name: <span class="s">&quot;New button&quot;</span>,</div>
<div class="t sy" style="left:11px;top:585.71px;width:62px;text-align:right;color:#237893;transform-origin:0 17.09px">14</div>
<div class="t sy" style="left:115.00px;top:585.71px;transform-origin:0 17.09px">    element_key: <span class="s">&quot;button_new&quot;</span>,</div>
<div class="t sy" style="left:11px;top:619.01px;width:62px;text-align:right;color:#237893;transform-origin:0 17.09px">15</div>
<div class="t sy" style="left:115.00px;top:619.01px;transform-origin:0 17.09px">  <span class="b2">}</span>,</div>
<div class="t sy" style="left:11px;top:652.31px;width:62px;text-align:right;color:#237893;transform-origin:0 17.09px">16</div>
<div class="t sy" style="left:115.00px;top:652.31px;transform-origin:0 17.09px"><span class="b1">}</span>;</div>
<div class="t sy" style="left:11px;top:685.61px;width:62px;text-align:right;color:#237893;transform-origin:0 17.09px">17</div>
<div class="t sy" style="left:115.00px;top:685.61px;transform-origin:0 17.09px"></div>
<div class="t sy" style="left:11px;top:718.91px;width:62px;text-align:right;color:#237893;transform-origin:0 17.09px">18</div>
<div class="t sy" style="left:115.00px;top:718.91px;transform-origin:0 17.09px"><span class="c">/**</span></div>
<div class="t sy" style="left:11px;top:752.21px;width:62px;text-align:right;color:#237893;transform-origin:0 17.09px">19</div>
<div class="t sy" style="left:115.00px;top:752.21px;transform-origin:0 17.09px"><span class="c"> * The user navigates to the New Account creation page</span></div>
<div class="t sy" style="left:11px;top:785.51px;width:62px;text-align:right;color:#237893;transform-origin:0 17.09px">20</div>
<div class="t sy" style="left:115.00px;top:785.51px;transform-origin:0 17.09px"><span class="c"> * </span><span class="k">@recorder</span></div>
<div class="t sy" style="left:11px;top:818.81px;width:62px;text-align:right;color:#237893;transform-origin:0 17.09px">21</div>
<div class="t sy" style="left:115.00px;top:818.81px;transform-origin:0 17.09px"><span class="c"> * @path=/lightning/o/Account/list</span></div>
<div class="t sy" style="left:11px;top:852.11px;width:62px;text-align:right;color:#237893;transform-origin:0 17.09px">22</div>
<div class="t sy" style="left:115.00px;top:852.11px;transform-origin:0 17.09px"><span class="c"> */</span></div>
<div class="t sy" style="left:11px;top:885.41px;width:62px;text-align:right;color:#237893;transform-origin:0 17.09px">23</div>
<div class="t sy" style="left:115.00px;top:885.41px;transform-origin:0 17.09px"><span class="k">async</span> <span class="k">function</span> the_user_navigates_to_the_new_account_creation_page<span class="b1">()</span> <span class="b1">{</span></div>
<div class="t sy" style="left:11px;top:918.71px;width:62px;text-align:right;color:#237893;transform-origin:0 17.09px">24</div>
<div class="t sy" style="left:115.00px;top:918.71px;transform-origin:0 17.09px">  <span class="c">// source: recorder</span></div>
<div class="t sy" style="left:11px;top:952.01px;width:62px;text-align:right;color:#237893;transform-origin:0 17.09px">25</div>
<div class="t sy" style="left:115.00px;top:952.01px;transform-origin:0 17.09px">  <span class="c">// implemented_at: 2025-11-27T16:41:57.120Z</span></div>
<div class="t sy" style="left:11px;top:985.31px;width:62px;text-align:right;color:#237893;transform-origin:0 17.09px">26</div>
<div class="t sy" style="left:115.00px;top:985.31px;transform-origin:0 17.09px">  <span class="k">const</span> _params = <span class="b2">{}</span>;</div>
<div class="t sy" style="left:11px;top:1018.61px;width:62px;text-align:right;color:#237893;transform-origin:0 17.09px">27</div>
<div class="t sy" style="left:115.00px;top:1018.61px;transform-origin:0 17.09px">  <span class="c">// Click on New button</span></div>
<div class="t sy" style="left:11px;top:1051.91px;width:62px;text-align:right;color:#237893;transform-origin:0 17.09px">28</div>
<div class="t sy" style="left:115.00px;top:1051.91px;transform-origin:0 17.09px">  <span class="k">await</span> context.web.click<span class="b2">(</span>elements<span class="b3">[</span><span class="s">&quot;button_new&quot;</span><span class="b3">]</span>, _params, <span class="k">null</span>, <span class="k">this</span><span class="b2">)</span>;</div>
<div class="t sy" style="left:11px;top:1085.21px;width:62px;text-align:right;color:#237893;transform-origin:0 17.09px">29</div>
<div class="t sy" style="left:115.00px;top:1085.21px;transform-origin:0 17.09px"><span class="b1">}</span></div>
<div class="t sy" style="left:11px;top:1118.51px;width:62px;text-align:right;color:#237893;transform-origin:0 17.09px">30</div>
<div class="t sy" style="left:115.00px;top:1118.51px;transform-origin:0 17.09px"></div>
<div class="t sy" style="left:11px;top:1151.81px;width:62px;text-align:right;color:#237893;transform-origin:0 17.09px">31</div>
<div class="t sy" style="left:115.00px;top:1151.81px;transform-origin:0 17.09px">When<span class="b1">(</span></div>
<div class="t sy" style="left:11px;top:1185.11px;width:62px;text-align:right;color:#237893;transform-origin:0 17.09px">32</div>
<div class="t sy" style="left:115.00px;top:1185.11px;transform-origin:0 17.09px">  <span class="s">&quot;The user navigates to the New Account creation page&quot;</span>,</div>
<div class="t sy" style="left:11px;top:1218.41px;width:62px;text-align:right;color:#237893;transform-origin:0 17.09px">33</div>
<div class="t sy" style="left:115.00px;top:1218.41px;transform-origin:0 17.09px">  <span class="b2">{</span> timeout: <span class="n">60000</span> <span class="b2">}</span>,</div>
</div>
<div class="a" style="left:1853px;top:147px;width:124.5px;height:1071px;overflow:hidden;background:#fff"></div>
<div class="a" style="left:1856px;top:146px;width:144px;height:1px;background:#efefef"></div>
<svg style="left:1853px;top:143px;overflow:hidden" width="124" height="124" viewBox="0 0 124 124"><g transform="scale(0.2225,0.2655)"><text x="35.96" y="19.21" fill="#0000ff" font-family="Liberation Mono" font-size="10" font-weight="bold" stroke="#0000ff" stroke-width="0.5" xml:space="preserve">import</text><text x="77.96" y="19.21" fill="#0431fa" font-family="Liberation Mono" font-size="10" font-weight="bold" stroke="#0431fa" stroke-width="0.5" xml:space="preserve">{</text><text x="89.96" y="19.21" fill="#8e8e8e" font-family="Liberation Mono" font-size="10" font-weight="bold" stroke="#8e8e8e" stroke-width="0.5" xml:space="preserve">Given</text><text x="119.96" y="19.21" fill="#000000" font-family="Liberation Mono" font-size="10" font-weight="bold" stroke="#000000" stroke-width="0.5" xml:space="preserve">, When, </text><text x="167.96" y="19.21" fill="#8e8e8e" font-family="Liberation Mono" font-size="10" font-weight="bold" stroke="#8e8e8e" stroke-width="0.5" xml:space="preserve">Then</text><text x="191.96" y="19.21" fill="#000000" font-family="Liberation Mono" font-size="10" font-weight="bold" stroke="#000000" stroke-width="0.5" xml:space="preserve">, </text><text x="203.96" y="19.21" fill="#8e8e8e" font-family="Liberation Mono" font-size="10" font-weight="bold" stroke="#8e8e8e" stroke-width="0.5" xml:space="preserve">After</text><text x="233.96" y="19.21" fill="#000000" font-family="Liberation Mono" font-size="10" font-weight="bold" stroke="#000000" stroke-width="0.5" xml:space="preserve">, </text><text x="245.96" y="19.21" fill="#8e8e8e" font-family="Liberation Mono" font-size="10" font-weight="bold" stroke="#8e8e8e" stroke-width="0.5" xml:space="preserve">setDefaultTimeout</text><text x="347.96" y="19.21" fill="#000000" font-family="Liberation Mono" font-size="10" font-weight="bold" stroke="#000000" stroke-width="0.5" xml:space="preserve">, </text><text x="359.96" y="19.21" fill="#8e8e8e" font-family="Liberation Mono" font-size="10" font-weight="bold" stroke="#8e8e8e" stroke-width="0.5" xml:space="preserve">Before</text><text x="401.96" y="19.21" fill="#0431fa" font-family="Liberation Mono" font-size="10" font-weight="bold" stroke="#0431fa" stroke-width="0.5" xml:space="preserve">}</text><text x="413.96" y="19.21" fill="#0000ff" font-family="Liberation Mono" font-size="10" font-weight="bold" stroke="#0000ff" stroke-width="0.5" xml:space="preserve">from</text><text x="443.96" y="19.21" fill="#a31515" font-family="Liberation Mono" font-size="10" font-weight="bold" stroke="#a31515" stroke-width="0.5" xml:space="preserve">&quot;@dev-blinq/cucumber-js&quot;</text><text x="587.96" y="19.21" fill="#000000" font-family="Liberation Mono" font-size="10" font-weight="bold" stroke="#000000" stroke-width="0.5" xml:space="preserve">;</text><text x="35.96" y="29.21" fill="#0000ff" font-family="Liberation Mono" font-size="10" font-weight="bold" stroke="#0000ff" stroke-width="0.5" xml:space="preserve">import</text><text x="77.96" y="29.21" fill="#0431fa" font-family="Liberation Mono" font-size="10" font-weight="bold" stroke="#0431fa" stroke-width="0.5" xml:space="preserve">{</text><text x="89.96" y="29.21" fill="#8e8e8e" font-family="Liberation Mono" font-size="10" font-weight="bold" stroke="#8e8e8e" stroke-width="0.5" xml:space="preserve">closeContext</text><text x="161.96" y="29.21" fill="#000000" font-family="Liberation Mono" font-size="10" font-weight="bold" stroke="#000000" stroke-width="0.5" xml:space="preserve">, </text><text x="173.96" y="29.21" fill="#8e8e8e" font-family="Liberation Mono" font-size="10" font-weight="bold" stroke="#8e8e8e" stroke-width="0.5" xml:space="preserve">initContext</text><text x="239.96" y="29.21" fill="#000000" font-family="Liberation Mono" font-size="10" font-weight="bold" stroke="#000000" stroke-width="0.5" xml:space="preserve">, </text><text x="251.96" y="29.21" fill="#8e8e8e" font-family="Liberation Mono" font-size="10" font-weight="bold" stroke="#8e8e8e" stroke-width="0.5" xml:space="preserve">navigate</text><text x="299.96" y="29.21" fill="#000000" font-family="Liberation Mono" font-size="10" font-weight="bold" stroke="#000000" stroke-width="0.5" xml:space="preserve">, TestContext </text><text x="383.96" y="29.21" fill="#0000ff" font-family="Liberation Mono" font-size="10" font-weight="bold" stroke="#0000ff" stroke-width="0.5" xml:space="preserve">as</text><text x="395.96" y="29.21" fill="#000000" font-family="Liberation Mono" font-size="10" font-weight="bold" stroke="#000000" stroke-width="0.5" xml:space="preserve"> context </text><text x="449.96" y="29.21" fill="#0431fa" font-family="Liberation Mono" font-size="10" font-weight="bold" stroke="#0431fa" stroke-width="0.5" xml:space="preserve">}</text><text x="461.96" y="29.21" fill="#0000ff" font-family="Liberation Mono" font-size="10" font-weight="bold" stroke="#0000ff" stroke-width="0.5" xml:space="preserve">from</text><text x="491.96" y="29.21" fill="#a31515" font-family="Liberation Mono" font-size="10" font-weight="bold" stroke="#a31515" stroke-width="0.5" xml:space="preserve">&quot;automation_model&quot;</text><text x="599.96" y="29.21" fill="#000000" font-family="Liberation Mono" font-size="10" font-weight="bold" stroke="#000000" stroke-width="0.5" xml:space="preserve">;</text><text x="35.96" y="49.21" fill="#0000ff" font-family="Liberation Mono" font-size="10" font-weight="bold" stroke="#0000ff" stroke-width="0.5" xml:space="preserve">const</text><text x="65.96" y="49.21" fill="#000000" font-family="Liberation Mono" font-size="10" font-weight="bold" stroke="#000000" stroke-width="0.5" xml:space="preserve"> elements = </text><text x="137.96" y="49.21" fill="#0431fa" font-family="Liberation Mono" font-size="10" font-weight="bold" stroke="#0431fa" stroke-width="0.5" xml:space="preserve">{</text><text x="35.96" y="59.21" fill="#000000" font-family="Liberation Mono" font-size="10" font-weight="bold" stroke="#000000" stroke-width="0.5" xml:space="preserve">  button_new: </text><text x="119.96" y="59.21" fill="#319331" font-family="Liberation Mono" font-size="10" font-weight="bold" stroke="#319331" stroke-width="0.5" xml:space="preserve">{</text><text x="35.96" y="69.21" fill="#000000" font-family="Liberation Mono" font-size="10" font-weight="bold" stroke="#000000" stroke-width="0.5" xml:space="preserve">    locators: </text><text x="119.96" y="69.21" fill="#7b3814" font-family="Liberation Mono" font-size="10" font-weight="bold" stroke="#7b3814" stroke-width="0.5" xml:space="preserve">[</text><text x="71.96" y="79.21" fill="#0431fa" font-family="Liberation Mono" font-size="10" font-weight="bold" stroke="#0431fa" stroke-width="0.5" xml:space="preserve">{</text><text x="77.96" y="79.21" fill="#000000" font-family="Liberation Mono" font-size="10" font-weight="bold" stroke="#000000" stroke-width="0.5" xml:space="preserve"> css: </text><text x="113.96" y="79.21" fill="#a31515" font-family="Liberation Mono" font-size="10" font-weight="bold" stroke="#a31515" stroke-width="0.5" xml:space="preserve">&#x27;internal:text=&quot;New&quot;s &gt;&gt; xpath=..&#x27;</text><text x="317.96" y="79.21" fill="#000000" font-family="Liberation Mono" font-size="10" font-weight="bold" stroke="#000000" stroke-width="0.5" xml:space="preserve">, priority: </text><text x="389.96" y="79.21" fill="#098658" font-family="Liberation Mono" font-size="10" font-weight="bold" stroke="#098658" stroke-width="0.5" xml:space="preserve">1</text><text x="401.96" y="79.21" fill="#0431fa" font-family="Liberation Mono" font-size="10" font-weight="bold" stroke="#0431fa" stroke-width="0.5" xml:space="preserve">}</text><text x="407.96" y="79.21" fill="#000000" font-family="Liberation Mono" font-size="10" font-weight="bold" stroke="#000000" stroke-width="0.5" xml:space="preserve">,</text><text x="71.96" y="89.21" fill="#0431fa" font-family="Liberation Mono" font-size="10" font-weight="bold" stroke="#0431fa" stroke-width="0.5" xml:space="preserve">{</text><text x="77.96" y="89.21" fill="#000000" font-family="Liberation Mono" font-size="10" font-weight="bold" stroke="#000000" stroke-width="0.5" xml:space="preserve"> css: </text><text x="113.96" y="89.21" fill="#a31515" font-family="Liberation Mono" font-size="10" font-weight="bold" stroke="#a31515" stroke-width="0.5" xml:space="preserve">&#x27;internal:text=&quot;New&quot;i &gt;&gt; xpath=..&#x27;</text><text x="317.96" y="89.21" fill="#000000" font-family="Liberation Mono" font-size="10" font-weight="bold" stroke="#000000" stroke-width="0.5" xml:space="preserve">, priority: </text><text x="389.96" y="89.21" fill="#098658" font-family="Liberation Mono" font-size="10" font-weight="bold" stroke="#098658" stroke-width="0.5" xml:space="preserve">1</text><text x="401.96" y="89.21" fill="#0431fa" font-family="Liberation Mono" font-size="10" font-weight="bold" stroke="#0431fa" stroke-width="0.5" xml:space="preserve">}</text><text x="407.96" y="89.21" fill="#000000" font-family="Liberation Mono" font-size="10" font-weight="bold" stroke="#000000" stroke-width="0.5" xml:space="preserve">,</text><text x="71.96" y="99.21" fill="#0431fa" font-family="Liberation Mono" font-size="10" font-weight="bold" stroke="#0431fa" stroke-width="0.5" xml:space="preserve">{</text><text x="77.96" y="99.21" fill="#000000" font-family="Liberation Mono" font-size="10" font-weight="bold" stroke="#000000" stroke-width="0.5" xml:space="preserve"> css: </text><text x="113.96" y="99.21" fill="#a31515" font-family="Liberation Mono" font-size="10" font-weight="bold" stroke="#a31515" stroke-width="0.5" xml:space="preserve">&#x27;a &gt;&gt; internal:has-text=&quot;New&quot;i&#x27;</text><text x="299.96" y="99.21" fill="#000000" font-family="Liberation Mono" font-size="10" font-weight="bold" stroke="#000000" stroke-width="0.5" xml:space="preserve">, priority: </text><text x="371.96" y="99.21" fill="#098658" font-family="Liberation Mono" font-size="10" font-weight="bold" stroke="#098658" stroke-width="0.5" xml:space="preserve">1</text><text x="383.96" y="99.21" fill="#0431fa" font-family="Liberation Mono" font-size="10" font-weight="bold" stroke="#0431fa" stroke-width="0.5" xml:space="preserve">}</text><text x="389.96" y="99.21" fill="#000000" font-family="Liberation Mono" font-size="10" font-weight="bold" stroke="#000000" stroke-width="0.5" xml:space="preserve">,</text><text x="71.96" y="109.21" fill="#0431fa" font-family="Liberation Mono" font-size="10" font-weight="bold" stroke="#0431fa" stroke-width="0.5" xml:space="preserve">{</text><text x="77.96" y="109.21" fill="#000000" font-family="Liberation Mono" font-size="10" font-weight="bold" stroke="#000000" stroke-width="0.5" xml:space="preserve"> css: </text><text x="113.96" y="109.21" fill="#a31515" font-family="Liberation Mono" font-size="10" font-weight="bold" stroke="#a31515" stroke-width="0.5" xml:space="preserve">&quot;a &gt;&gt; internal:has-text=/^New$/&quot;</text><text x="305.96" y="109.21" fill="#000000" font-family="Liberation Mono" font-size="10" font-weight="bold" stroke="#000000" stroke-width="0.5" xml:space="preserve">, priority: </text><text x="377.96" y="109.21" fill="#098658" font-family="Liberation Mono" font-size="10" font-weight="bold" stroke="#098658" stroke-width="0.5" xml:space="preserve">1</text><text x="389.96" y="109.21" fill="#0431fa" font-family="Liberation Mono" font-size="10" font-weight="bold" stroke="#0431fa" stroke-width="0.5" xml:space="preserve">}</text><text x="395.96" y="109.21" fill="#000000" font-family="Liberation Mono" font-size="10" font-weight="bold" stroke="#000000" stroke-width="0.5" xml:space="preserve">,</text><text x="71.96" y="119.21" fill="#0431fa" font-family="Liberation Mono" font-size="10" font-weight="bold" stroke="#0431fa" stroke-width="0.5" xml:space="preserve">{</text><text x="77.96" y="119.21" fill="#000000" font-family="Liberation Mono" font-size="10" font-weight="bold" stroke="#000000" stroke-width="0.5" xml:space="preserve"> css: </text><text x="113.96" y="119.21" fill="#a31515" font-family="Liberation Mono" font-size="10" font-weight="bold" stroke="#a31515" stroke-width="0.5" xml:space="preserve">&#x27;internal:role=button[name=&quot;New&quot;s]&#x27;</text><text x="323.96" y="119.21" fill="#000000" font-family="Liberation Mono" font-size="10" font-weight="bold" stroke="#000000" stroke-width="0.5" xml:space="preserve">, priority: </text><text x="395.96" y="119.21" fill="#098658" font-family="Liberation Mono" font-size="10" font-weight="bold" stroke="#098658" stroke-width="0.5" xml:space="preserve">1</text><text x="407.96" y="119.21" fill="#0431fa" font-family="Liberation Mono" font-size="10" font-weight="bold" stroke="#0431fa" stroke-width="0.5" xml:space="preserve">}</text><text x="413.96" y="119.21" fill="#000000" font-family="Liberation Mono" font-size="10" font-weight="bold" stroke="#000000" stroke-width="0.5" xml:space="preserve">,</text><text x="59.96" y="129.21" fill="#7b3814" font-family="Liberation Mono" font-size="10" font-weight="bold" stroke="#7b3814" stroke-width="0.5" xml:space="preserve">]</text><text x="65.96" y="129.21" fill="#000000" font-family="Liberation Mono" font-size="10" font-weight="bold" stroke="#000000" stroke-width="0.5" xml:space="preserve">,</text><text x="35.96" y="139.21" fill="#000000" font-family="Liberation Mono" font-size="10" font-weight="bold" stroke="#000000" stroke-width="0.5" xml:space="preserve">    element_name: </text><text x="143.96" y="139.21" fill="#a31515" font-family="Liberation Mono" font-size="10" font-weight="bold" stroke="#a31515" stroke-width="0.5" xml:space="preserve">&quot;New button&quot;</text><text x="215.96" y="139.21" fill="#000000" font-family="Liberation Mono" font-size="10" font-weight="bold" stroke="#000000" stroke-width="0.5" xml:space="preserve">,</text><text x="35.96" y="149.21" fill="#000000" font-family="Liberation Mono" font-size="10" font-weight="bold" stroke="#000000" stroke-width="0.5" xml:space="preserve">    element_key: </text><text x="137.96" y="149.21" fill="#a31515" font-family="Liberation Mono" font-size="10" font-weight="bold" stroke="#a31515" stroke-width="0.5" xml:space="preserve">&quot;button_new&quot;</text><text x="209.96" y="149.21" fill="#000000" font-family="Liberation Mono" font-size="10" font-weight="bold" stroke="#000000" stroke-width="0.5" xml:space="preserve">,</text><text x="47.96" y="159.21" fill="#319331" font-family="Liberation Mono" font-size="10" font-weight="bold" stroke="#319331" stroke-width="0.5" xml:space="preserve">}</text><text x="53.96" y="159.21" fill="#000000" font-family="Liberation Mono" font-size="10" font-weight="bold" stroke="#000000" stroke-width="0.5" xml:space="preserve">,</text><text x="35.96" y="169.21" fill="#0431fa" font-family="Liberation Mono" font-size="10" font-weight="bold" stroke="#0431fa" stroke-width="0.5" xml:space="preserve">}</text><text x="41.96" y="169.21" fill="#000000" font-family="Liberation Mono" font-size="10" font-weight="bold" stroke="#000000" stroke-width="0.5" xml:space="preserve">;</text><text x="35.96" y="189.21" fill="#008000" font-family="Liberation Mono" font-size="10" font-weight="bold" stroke="#008000" stroke-width="0.5" xml:space="preserve">/**</text><text x="35.96" y="199.21" fill="#008000" font-family="Liberation Mono" font-size="10" font-weight="bold" stroke="#008000" stroke-width="0.5" xml:space="preserve"> * The user navigates to the New Account creation page</text><text x="35.96" y="209.21" fill="#008000" font-family="Liberation Mono" font-size="10" font-weight="bold" stroke="#008000" stroke-width="0.5" xml:space="preserve"> * </text><text x="53.96" y="209.21" fill="#0000ff" font-family="Liberation Mono" font-size="10" font-weight="bold" stroke="#0000ff" stroke-width="0.5" xml:space="preserve">@recorder</text><text x="35.96" y="219.21" fill="#008000" font-family="Liberation Mono" font-size="10" font-weight="bold" stroke="#008000" stroke-width="0.5" xml:space="preserve"> * @path=/lightning/o/Account/list</text><text x="35.96" y="229.21" fill="#008000" font-family="Liberation Mono" font-size="10" font-weight="bold" stroke="#008000" stroke-width="0.5" xml:space="preserve"> */</text><text x="35.96" y="239.21" fill="#0000ff" font-family="Liberation Mono" font-size="10" font-weight="bold" stroke="#0000ff" stroke-width="0.5" xml:space="preserve">async</text><text x="71.96" y="239.21" fill="#0000ff" font-family="Liberation Mono" font-size="10" font-weight="bold" stroke="#0000ff" stroke-width="0.5" xml:space="preserve">function</text><text x="119.96" y="239.21" fill="#000000" font-family="Liberation Mono" font-size="10" font-weight="bold" stroke="#000000" stroke-width="0.5" xml:space="preserve"> the_user_navigates_to_the_new_account_creation_page</text><text x="431.96" y="239.21" fill="#0431fa" font-family="Liberation Mono" font-size="10" font-weight="bold" stroke="#0431fa" stroke-width="0.5" xml:space="preserve">()</text><text x="449.96" y="239.21" fill="#0431fa" font-family="Liberation Mono" font-size="10" font-weight="bold" stroke="#0431fa" stroke-width="0.5" xml:space="preserve">{</text><text x="47.96" y="249.21" fill="#008000" font-family="Liberation Mono" font-size="10" font-weight="bold" stroke="#008000" stroke-width="0.5" xml:space="preserve">// source: recorder</text><text x="47.96" y="259.21" fill="#008000" font-family="Liberation Mono" font-size="10" font-weight="bold" stroke="#008000" stroke-width="0.5" xml:space="preserve">// implemented_at: 2025-11-27T16:41:57.120Z</text><text x="47.96" y="269.21" fill="#0000ff" font-family="Liberation Mono" font-size="10" font-weight="bold" stroke="#0000ff" stroke-width="0.5" xml:space="preserve">const</text><text x="77.96" y="269.21" fill="#000000" font-family="Liberation Mono" font-size="10" font-weight="bold" stroke="#000000" stroke-width="0.5" xml:space="preserve"> _params = </text><text x="143.96" y="269.21" fill="#319331" font-family="Liberation Mono" font-size="10" font-weight="bold" stroke="#319331" stroke-width="0.5" xml:space="preserve">{}</text><text x="155.96" y="269.21" fill="#000000" font-family="Liberation Mono" font-size="10" font-weight="bold" stroke="#000000" stroke-width="0.5" xml:space="preserve">;</text><text x="47.96" y="279.21" fill="#008000" font-family="Liberation Mono" font-size="10" font-weight="bold" stroke="#008000" stroke-width="0.5" xml:space="preserve">// Click on New button</text><text x="47.96" y="289.21" fill="#0000ff" font-family="Liberation Mono" font-size="10" font-weight="bold" stroke="#0000ff" stroke-width="0.5" xml:space="preserve">await</text><text x="77.96" y="289.21" fill="#000000" font-family="Liberation Mono" font-size="10" font-weight="bold" stroke="#000000" stroke-width="0.5" xml:space="preserve"> context.web.click</text><text x="185.96" y="289.21" fill="#319331" font-family="Liberation Mono" font-size="10" font-weight="bold" stroke="#319331" stroke-width="0.5" xml:space="preserve">(</text><text x="191.96" y="289.21" fill="#000000" font-family="Liberation Mono" font-size="10" font-weight="bold" stroke="#000000" stroke-width="0.5" xml:space="preserve">elements</text><text x="239.96" y="289.21" fill="#7b3814" font-family="Liberation Mono" font-size="10" font-weight="bold" stroke="#7b3814" stroke-width="0.5" xml:space="preserve">[</text><text x="245.96" y="289.21" fill="#a31515" font-family="Liberation Mono" font-size="10" font-weight="bold" stroke="#a31515" stroke-width="0.5" xml:space="preserve">&quot;button_new&quot;</text><text x="317.96" y="289.21" fill="#7b3814" font-family="Liberation Mono" font-size="10" font-weight="bold" stroke="#7b3814" stroke-width="0.5" xml:space="preserve">]</text><text x="323.96" y="289.21" fill="#000000" font-family="Liberation Mono" font-size="10" font-weight="bold" stroke="#000000" stroke-width="0.5" xml:space="preserve">, _params, </text><text x="389.96" y="289.21" fill="#0000ff" font-family="Liberation Mono" font-size="10" font-weight="bold" stroke="#0000ff" stroke-width="0.5" xml:space="preserve">null</text><text x="413.96" y="289.21" fill="#000000" font-family="Liberation Mono" font-size="10" font-weight="bold" stroke="#000000" stroke-width="0.5" xml:space="preserve">, </text><text x="425.96" y="289.21" fill="#0000ff" font-family="Liberation Mono" font-size="10" font-weight="bold" stroke="#0000ff" stroke-width="0.5" xml:space="preserve">this</text><text x="449.96" y="289.21" fill="#319331" font-family="Liberation Mono" font-size="10" font-weight="bold" stroke="#319331" stroke-width="0.5" xml:space="preserve">)</text><text x="455.96" y="289.21" fill="#000000" font-family="Liberation Mono" font-size="10" font-weight="bold" stroke="#000000" stroke-width="0.5" xml:space="preserve">;</text><text x="35.96" y="299.21" fill="#0431fa" font-family="Liberation Mono" font-size="10" font-weight="bold" stroke="#0431fa" stroke-width="0.5" xml:space="preserve">}</text><text x="35.96" y="319.21" fill="#000000" font-family="Liberation Mono" font-size="10" font-weight="bold" stroke="#000000" stroke-width="0.5" xml:space="preserve">When</text><text x="59.96" y="319.21" fill="#0431fa" font-family="Liberation Mono" font-size="10" font-weight="bold" stroke="#0431fa" stroke-width="0.5" xml:space="preserve">(</text><text x="47.96" y="329.21" fill="#a31515" font-family="Liberation Mono" font-size="10" font-weight="bold" stroke="#a31515" stroke-width="0.5" xml:space="preserve">&quot;The user navigates to the New Account creation page&quot;</text><text x="365.96" y="329.21" fill="#000000" font-family="Liberation Mono" font-size="10" font-weight="bold" stroke="#000000" stroke-width="0.5" xml:space="preserve">,</text><text x="47.96" y="339.21" fill="#319331" font-family="Liberation Mono" font-size="10" font-weight="bold" stroke="#319331" stroke-width="0.5" xml:space="preserve">{</text><text x="53.96" y="339.21" fill="#000000" font-family="Liberation Mono" font-size="10" font-weight="bold" stroke="#000000" stroke-width="0.5" xml:space="preserve"> timeout: </text><text x="113.96" y="339.21" fill="#098658" font-family="Liberation Mono" font-size="10" font-weight="bold" stroke="#098658" stroke-width="0.5" xml:space="preserve">60000</text><text x="149.96" y="339.21" fill="#319331" font-family="Liberation Mono" font-size="10" font-weight="bold" stroke="#319331" stroke-width="0.5" xml:space="preserve">}</text><text x="155.96" y="339.21" fill="#000000" font-family="Liberation Mono" font-size="10" font-weight="bold" stroke="#000000" stroke-width="0.5" xml:space="preserve">,</text><text x="35.96" y="349.21" fill="#000000" font-family="Liberation Mono" font-size="10" font-weight="bold" stroke="#000000" stroke-width="0.5" xml:space="preserve">  the_user_navigates_to_the_new_account_creation_page</text><text x="35.96" y="359.21" fill="#0431fa" font-family="Liberation Mono" font-size="10" font-weight="bold" stroke="#0431fa" stroke-width="0.5" xml:space="preserve">)</text><text x="41.96" y="359.21" fill="#000000" font-family="Liberation Mono" font-size="10" font-weight="bold" stroke="#000000" stroke-width="0.5" xml:space="preserve">;</text></g></svg>
<div class="a" style="left:1852px;top:147px;width:4px;height:1071px;background:#efefef"></div>
<div class="a" style="left:1977px;top:147px;width:1px;height:1071px;background:#efefef"></div>
<div class="a" style="left:1978px;top:272px;width:22px;height:3px;background:#424242"></div>
<div class="a" style="left:0;top:1218px;width:2000px;height:44px;background:#007acc"></div>
<div class="a" style="left:1313.5px;top:1218px;width:50.5px;height:44px;background:#0b3d66"></div>
<svg style="left:16px;top:1223px" width="22" height="22" viewBox="0 0 22 22"><path d="M17.2 2.5L9.9 9.2L17 16.5M1.7 9.5L8.5 16.8" stroke="#fff" stroke-width="1.8" fill="none"/></svg>
<svg style="left:64px;top:1224px" width="24" height="24" viewBox="0 0 24 24"><circle cx="12" cy="11.2" r="10.4" stroke="#fff" stroke-width="1.7" fill="none"/><path d="M8 7.2L16 15.2M16 7.2L8 15.2" stroke="#fff" stroke-width="1.7"/></svg>
<div class="t" style="left:95.00px;top:1226.10px;font-size:20px;color:#ffffff;font-weight:400;font-family:'Liberation Sans';letter-spacing:0.000px;">0</div>
<svg style="left:113px;top:1224px" width="26" height="24" viewBox="0 0 26 24"><path d="M13 2L24 22H2Z" stroke="#fff" stroke-width="1.7" fill="none" stroke-linejoin="round"/><path d="M13 8V15" stroke="#fff" stroke-width="1.7"/></svg>
<div class="t" style="left:143.50px;top:1226.10px;font-size:20px;color:#ffffff;font-weight:400;font-family:'Liberation Sans';letter-spacing:0.000px;">0</div>
<svg style="left:1326px;top:1222px" width="24" height="24" viewBox="0 0 24 24"><circle cx="12" cy="12" r="9" stroke="#fff" stroke-width="1.7" fill="none"/><path d="M12 7V17M7 12H17" stroke="#fff" stroke-width="1.7"/></svg>
<div class="t" style="left:1377.60px;top:1226.10px;font-size:20px;color:#ffffff;font-weight:400;font-family:'Liberation Sans';letter-spacing:0.013px;">Ln 9, Col 12</div>
<div class="t" style="left:1512.70px;top:1226.10px;font-size:20px;color:#ffffff;font-weight:400;font-family:'Liberation Sans';letter-spacing:-0.307px;">Spaces: 2</div>
<div class="t" style="left:1627.60px;top:1226.10px;font-size:20px;color:#ffffff;font-weight:400;font-family:'Liberation Sans';letter-spacing:-0.318px;">UTF-8</div>
<div class="t" style="left:1710.50px;top:1226.10px;font-size:20px;color:#ffffff;font-weight:400;font-family:'Liberation Sans';letter-spacing:-3.044px;">LF</div>
<div class="t" style="left:1759.50px;top:1226.10px;font-size:20px;color:#ffffff;font-weight:400;font-family:'Liberation Sans';letter-spacing:0.539px;">{ }</div>
<div class="t" style="left:1796.50px;top:1226.10px;font-size:20px;color:#ffffff;font-weight:400;font-family:'Liberation Sans';letter-spacing:-0.464px;">JavaScript</div>
<svg style="left:1905px;top:1220px" width="36" height="24" viewBox="0 0 36 24"><circle cx="13.5" cy="10" r="3.4" stroke="#fff" stroke-width="2" fill="none"/><circle cx="23.5" cy="10" r="3.4" stroke="#fff" stroke-width="2" fill="none"/><path d="M7.5 21Q7.5 15.5 10.3 13.5M26.7 13.5Q29.5 15.5 29.5 21" stroke="#fff" stroke-width="2.2" fill="none"/><circle cx="16.5" cy="18.5" r="1" fill="#fff"/><circle cx="20.5" cy="18.5" r="1" fill="#fff"/></svg>
<svg style="left:1963px;top:1222px" width="24" height="24" viewBox="0 0 24 24"><path d="M4 22V11Q4 3 12 3Q20 3 20 11V22" stroke="#fff" stroke-width="1.8" fill="none"/></svg>
</div>
</body></html>
